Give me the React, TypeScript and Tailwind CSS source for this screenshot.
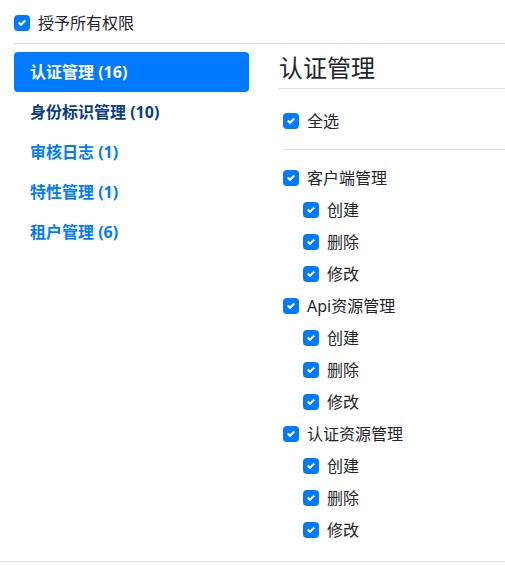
import React from "react";

const Check = () => (
  <span className="flex h-4 w-4 shrink-0 items-center justify-center rounded-[4px] bg-[#007bff]">
    <svg width="8" height="8" viewBox="0 0 8 8">
      <path fill="#fff" d="M6.564.75l-3.59 3.612-1.538-1.55L0 4.26l2.974 2.99L8 2.193z" />
    </svg>
  </span>
);

const Row = ({ label, sub }: { label: string; sub?: boolean }) => (
  <div className={`flex h-4 items-center gap-2 ${sub ? "ml-[20px]" : ""}`}>
    <Check />
    <span className="text-[16px] leading-none text-[#212529]">{label}</span>
  </div>
);

const nav = [
  { t: "认证管理 (16)", c: "bg-[#007bff] text-white" },
  { t: "身份标识管理 (10)", c: "text-[#0b3c84]" },
  { t: "审核日志 (1)", c: "text-[#007bff]" },
  { t: "特性管理 (1)", c: "text-[#007bff]" },
  { t: "租户管理 (6)", c: "text-[#007bff]" },
];

const groups = ["客户端管理", "Api资源管理", "认证资源管理"];
const perms = ["创建", "删除", "修改"];

export default function App() {
  return (
    <div
      className="w-[505px] border-b border-[#dee2e6] bg-white text-[#212529]"
      style={{ fontFamily: '"Noto Sans", "Noto Sans CJK SC", sans-serif' }}
    >
      <div className="ml-[14px] border-b border-[#dee2e6] pt-[15px] pb-[12px]">
        <Row label="授予所有权限" />
      </div>
      <div className="flex pt-[8px]">
        <div className="ml-[14px] flex w-[235px] shrink-0 flex-col">
          {nav.map((n) => (
            <div
              key={n.t}
              className={`flex h-[40px] items-center rounded-[4px] px-4 text-[16px] font-bold ${n.c}`}
            >
              {n.t}
            </div>
          ))}
        </div>
        <div className="ml-[30px] flex-1 pb-[23px]">
          <div className="border-b border-[#dee2e6] pt-[1px] pb-[6px] text-[24px] leading-[29px] font-normal">
            认证管理
          </div>
          <div className="ml-[4px] border-b border-[#dee2e6] pt-[24px] pb-[20px]">
            <Row label="全选" />
          </div>
          <div className="ml-[4px] flex flex-col gap-4 pt-[20px]">
            {groups.map((g) => (
              <React.Fragment key={g}>
                <Row label={g} />
                {perms.map((p) => (
                  <Row key={g + p} label={p} sub />
                ))}
              </React.Fragment>
            ))}
          </div>
        </div>
      </div>
    </div>
  );
}
